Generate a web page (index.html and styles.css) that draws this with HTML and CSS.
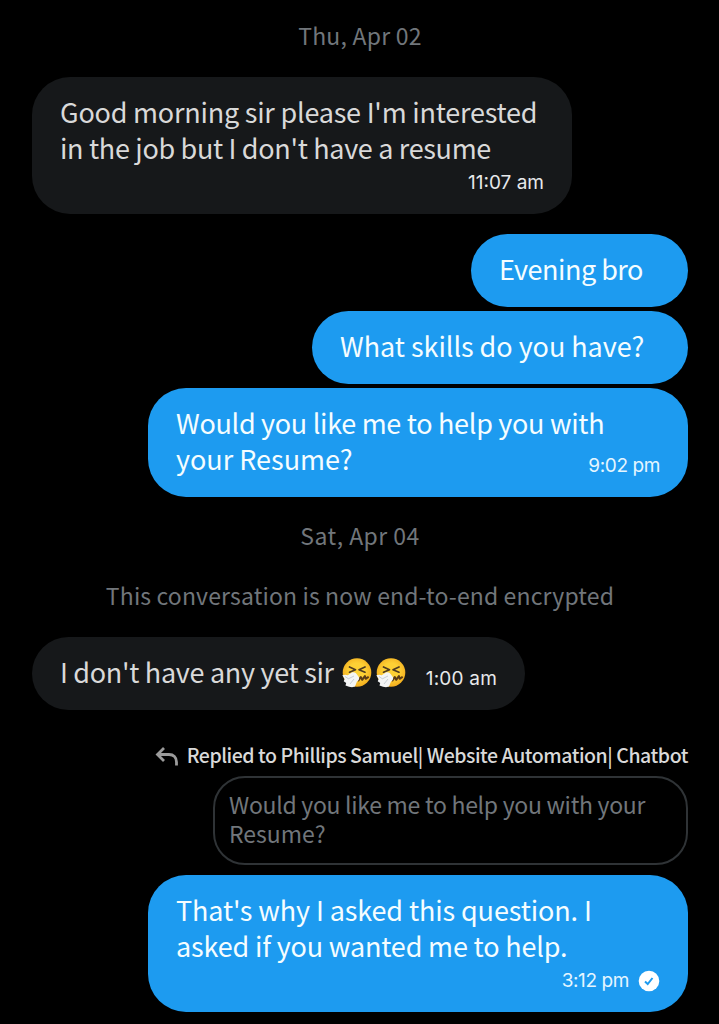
FILE: index.html
```html
<!DOCTYPE html>
<html lang="en">
<head>
<meta charset="utf-8">
<title>Conversation</title>
<link rel="stylesheet" href="styles.css">
</head>
<body>
<svg class="defs" width="0" height="0" aria-hidden="true">
  <defs>
    <radialGradient id="face" cx="50%" cy="45%" r="55%"><stop offset="50%" stop-color="#fdd035"/><stop offset="100%" stop-color="#f3ad1e"/></radialGradient>
    <symbol id="sneeze" viewBox="0 0 30 30">
      <circle cx="15" cy="14.5" r="14.3" fill="url(#face)"/>
      <path d="M7.500 9l6 2.700-6 2.500M23 9l-6 2.700 6 2.500" fill="none" stroke="#4e3a22" stroke-width="1.7" stroke-linecap="round" stroke-linejoin="round"/>
      <path d="M16.500 22.500l2.300-3.500 1.400 2.800 2.700-3.800.8 2.800 2.400-1.600" fill="none" stroke="#5b3b16" stroke-width="2" stroke-linecap="round" stroke-linejoin="round"/>
      <path d="M.3 17.200l3-.5 2.500.5 4-2.800c2.500-.8 4.500.5 5.500 2.500l1.700 2.300c.5 2-.5 3.500-2 4.300l-2 5-3 .8-3-.5-3.500-1.300.7-2.500-2.500-1.700 1-2.300z" fill="#f4f5f5"/>
      <path d="M6 21l6-3M8 26l4-5M3 18.500l3 2" fill="none" stroke="#c3cbd0" stroke-width=".9"/>
    </symbol>
  </defs>
</svg>
<main class="chat">
  <div class="notice date">Thu, Apr 02</div>
  <section class="bubble received first">
    <div class="message"><span class="line l1">Good morning sir please I'm interested</span><span class="line l2">in the job but I don't have a resume</span></div>
    <time class="time below t1">11:07 am</time>
  </section>
  <section class="bubble sent evening"><div class="message"><span class="line l3">Evening bro</span></div></section>
  <section class="bubble sent skills"><div class="message"><span class="line l4">What skills do you have?</span></div></section>
  <section class="bubble sent wide inline">
    <div class="message shrink"><span class="line l5">Would you like me to help you with</span><span class="line l6">your Resume?</span></div>
    <time class="time t2">9:02 pm</time>
  </section>
  <div class="notice second">Sat, Apr 04</div>
  <div class="notice encrypted">This conversation is now end-to-end encrypted</div>
  <section class="bubble received inline yet">
    <div class="message row"><span class="line l7">I don't have any yet sir</span><span class="emojis"><svg class="emoji" role="img" aria-label="Sneezing face"><use href="#sneeze"/></svg><svg class="emoji" role="img" aria-label="Sneezing face"><use href="#sneeze"/></svg></span></div>
    <time class="time t3">1:00 am</time>
  </section>
  <div class="reply">
    <svg class="reply-icon" viewBox="0 0 24 20" aria-hidden="true"><path d="M9 1L2.500 7.500 9 14M3 7.500H14c4.500 0 7.500 3 7.500 7.500v3.500" fill="none" stroke="#9b9b9b" stroke-width="2.800"/></svg>
    <span class="reply-name">Replied to Phillips Samuel| Website Automation| Chatbot</span>
  </div>
  <blockquote class="quote"><span class="line q1">Would you like me to help you with your</span><span class="line q2">Resume?</span></blockquote>
  <section class="bubble sent wide">
    <div class="message"><span class="line l8">That's why I asked this question. I</span><span class="line l9">asked if you wanted me to help.</span></div>
    <div class="status"><time class="time t4">3:12 pm</time><svg class="check" viewBox="0 0 22 22" aria-hidden="true"><circle cx="11" cy="11" r="10.300" fill="#fff"/><path d="M7 11.500l2.700 2.500 4.800-6" fill="none" stroke="#1d9bf0" stroke-width="2"/></svg></div>
  </section>
</main>
</body>
</html>
```
FILE: styles.css
```css
* { box-sizing: border-box; }
body { margin: 0; background: #000; font-family: "Noto Sans CJK SC", "Noto Sans", sans-serif; overflow: hidden; }
.defs { display: block; }
.chat { width: 719px; height: 1024px; padding: 20px 31px 0 32px; display: flex; flex-direction: column; align-items: flex-start; }
.notice { flex: none; align-self: center; height: 30px; line-height: 30px; font-size: 23px; color: #71767b; white-space: nowrap; }
.date { margin-bottom: 27px; letter-spacing: .24px; }
.bubble { flex: none; border-radius: 38px; padding: 17px 28px 18px; font-size: 27px; line-height: 36px; display: flex; flex-direction: column; }
.received { background: #16181a; color: #d9d9d9; }
.sent { background: #1d9bf0; color: #f5fdff; align-self: flex-end; }
.line { display: block; white-space: nowrap; }
.first { width: 540px; height: 137px; margin-bottom: 20px; }
.evening { width: 217px; height: 73px; margin-bottom: 4px; }
.skills { width: 376px; height: 73px; margin-bottom: 4px; }
.wide { width: 540px; height: 137px; }
.inline { flex-direction: row; justify-content: space-between; align-items: flex-start; }
.wide.inline { height: 109px; margin-bottom: 23px; }
.shrink { width: 400px; }
.time { font-family: Inter, Roboto, sans-serif; font-size: 19px; line-height: 26px; color: #e7e9ea; white-space: nowrap; }
.inline .time { align-self: flex-end; }
.sent .time { color: #e5f6ff; }
.below { align-self: flex-end; margin-top: 4px; }
.second { margin-bottom: 30px; letter-spacing: .45px; }
.encrypted { margin-bottom: 27px; letter-spacing: .14px; }
.yet { width: 493px; height: 73px; margin-bottom: 30px; }
.row { display: flex; align-items: center; gap: 8px; }
.emojis { display: flex; gap: 4px; padding-top: 2px; }
.emoji { display: block; width: 30px; height: 30px; }
.reply { flex: none; align-self: flex-end; height: 30px; margin-bottom: 6px; display: flex; align-items: center; gap: 8px; }
.reply-icon { width: 24px; height: 20px; margin-top: 3px; }
.reply-name { font-size: 19.5px; font-weight: 500; line-height: 30px; color: #d9d9d9; white-space: nowrap; letter-spacing: -.45px; }
.quote { flex: none; align-self: flex-end; width: 475px; height: 89px; margin: 0 0 10px; padding: 12px 14px; border: 2px solid #2f3336; border-radius: 32px; color: #71767b; font-size: 23px; line-height: 29px; }
.status { display: flex; align-self: flex-end; gap: 9px; align-items: center; margin-top: 4px; }
.check { width: 22px; height: 22px; }
.l1 { letter-spacing: -.22px; }
.l2 { letter-spacing: -.32px; }
.l3 { letter-spacing: -.5px; }
.l4 { letter-spacing: -.04px; }
.l5 { letter-spacing: -.3px; }
.l7 { letter-spacing: -.3px; }
.l8 { letter-spacing: -.12px; }
.l9 { letter-spacing: -.17px; }
.q1 { letter-spacing: -.29px; }
.t2 { letter-spacing: -.4px; }
.t3 { letter-spacing: .2px; }
.t4 { letter-spacing: -.4px; }
```
